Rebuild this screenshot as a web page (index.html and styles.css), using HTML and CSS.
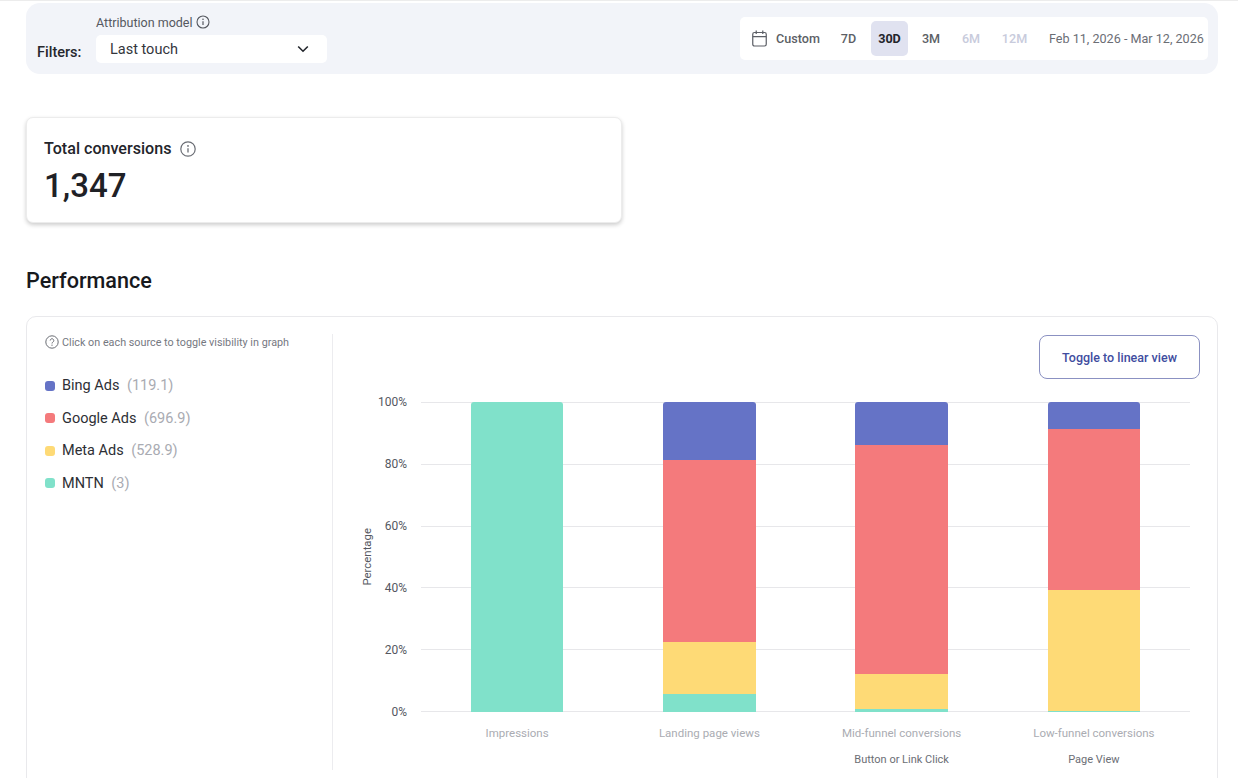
FILE: index.html
```html
<!DOCTYPE html>
<html lang="en">
<head>
<meta charset="utf-8">
<title>Performance</title>
<link rel="stylesheet" href="styles.css">
</head>
<body>
<div class="page">
  <section class="filters">
    <div class="filters-left">
      <span class="filters-label">Filters:</span>
      <div class="field">
        <div class="field-label">Attribution model
          <svg class="icon-info-sm" viewBox="0 0 14 14"><circle cx="7" cy="7" r="6" fill="none" stroke="#55585f" stroke-width="1.1"/><path d="M7 6.3v3.6" stroke="#55585f" stroke-width="1.2" fill="none"/><circle cx="7" cy="4.3" r=".8" fill="#55585f"/></svg>
        </div>
        <div class="select"><span>Last touch</span>
          <svg class="chev" viewBox="0 0 12 8"><path d="M1.2 1.5 6 6.2l4.8-4.7" fill="none" stroke="#22252b" stroke-width="1.6"/></svg>
        </div>
      </div>
    </div>
    <div class="range">
      <svg class="cal" viewBox="0 0 16 18"><rect x=".8" y="2.6" width="14.4" height="14.4" rx="1.8" fill="none" stroke="#5c5f66" stroke-width="1.3"/><path d="M.8 7h14.4M4.5.5v3.6M11.5.5v3.6" fill="none" stroke="#5c5f66" stroke-width="1.3"/></svg>
      <span class="range-item custom">Custom</span>
      <span class="range-item r7">7D</span>
      <span class="range-item active">30D</span>
      <span class="range-item r3">3M</span>
      <span class="range-item off r6">6M</span>
      <span class="range-item off r12">12M</span>
      <span class="dates">Feb 11, 2026 - Mar 12, 2026</span>
    </div>
  </section>

  <section class="kpi">
    <div class="kpi-title">Total conversions
      <svg class="icon-info" viewBox="0 0 16 16"><circle cx="8" cy="8" r="7.2" fill="none" stroke="#6a6d74" stroke-width="1.2"/><path d="M8 7.2v4.3" stroke="#6a6d74" stroke-width="1.3" fill="none"/><circle cx="8" cy="4.9" r=".9" fill="#6a6d74"/></svg>
    </div>
    <div class="kpi-value">1,347</div>
  </section>

  <h2 class="heading">Performance</h2>

  <section class="panel">
    <aside class="legend">
      <div class="hint">
        <svg class="icon-help" viewBox="0 0 14 14"><circle cx="7" cy="7" r="6.2" fill="none" stroke="#6a6d74" stroke-width="1"/><path d="M5.2 5.5a1.8 1.8 0 1 1 2.7 1.6c-.6.35-.9.7-.9 1.4" fill="none" stroke="#6a6d74" stroke-width="1"/><circle cx="7" cy="10.2" r=".65" fill="#6a6d74"/></svg>
        Click on each source to toggle visibility in graph
      </div>
      <ul class="sources">
        <li><i class="dot blue"></i>Bing Ads<span class="num">(119.1)</span></li>
        <li><i class="dot red"></i>Google Ads<span class="num">(696.9)</span></li>
        <li><i class="dot yellow"></i>Meta Ads<span class="num">(528.9)</span></li>
        <li><i class="dot teal"></i>MNTN<span class="num">(3)</span></li>
      </ul>
    </aside>
    <div class="chart-area">
      <div class="toolbar"><button class="toggle" type="button">Toggle to linear view</button></div>
      <div class="chart">
        <div class="y-title"><span>Percentage</span></div>
        <div class="y-ticks">
          <span>100%</span><span>80%</span><span>60%</span><span>40%</span><span>20%</span><span>0%</span>
        </div>
        <div class="plot-wrap">
          <div class="plot">
            <div class="grid"><i></i><i></i><i></i><i></i><i></i><i></i></div>
            <div class="bars">
              <div class="col"><div class="bar"><div class="seg teal" style="height:100%"></div></div></div>
              <div class="col"><div class="bar">
                <div class="seg blue" style="height:18.7%"></div>
                <div class="seg red" style="height:58.6%"></div>
                <div class="seg yellow" style="height:16.9%"></div>
                <div class="seg teal" style="height:5.8%"></div>
              </div></div>
              <div class="col"><div class="bar">
                <div class="seg blue" style="height:13.9%"></div>
                <div class="seg red" style="height:73.9%"></div>
                <div class="seg yellow" style="height:11.4%"></div>
                <div class="seg teal" style="height:0.8%"></div>
              </div></div>
              <div class="col"><div class="bar">
                <div class="seg blue" style="height:8.7%"></div>
                <div class="seg red" style="height:51.8%"></div>
                <div class="seg yellow" style="height:39.2%"></div>
                <div class="seg teal" style="height:0.3%"></div>
              </div></div>
            </div>
          </div>
          <div class="x-labels">
            <div class="x-col"><span class="x-main">Impressions</span></div>
            <div class="x-col"><span class="x-main">Landing page views</span></div>
            <div class="x-col"><span class="x-main">Mid-funnel conversions</span><span class="x-sub">Button or Link Click</span></div>
            <div class="x-col"><span class="x-main">Low-funnel conversions</span><span class="x-sub">Page View</span></div>
          </div>
        </div>
      </div>
    </div>
  </section>
</div>
</body>
</html>
```

FILE: styles.css
```css
* { box-sizing: border-box; }
html, body { margin: 0; padding: 0; height: 778px; overflow: hidden; background: #fff; }
body { font-family: Roboto, "Liberation Sans", sans-serif; color: #1f2126; }

.page {
  height: 778px;
  overflow: hidden;
  padding: 2px 20px 0 26px;
  border-top: 1px solid #ececec;
}

/* Filters */
.filters {
  height: 71px;
  background: #f2f4f9;
  border-radius: 14px;
  display: flex;
  justify-content: space-between;
  align-items: flex-start;
  padding: 0 10px 0 11px;
}
.filters-left { display: flex; align-items: flex-end; height: 60px; }
.filters-label { font-size: 14.5px; font-weight: 500; color: #26282d; width: 59px; line-height: 17px; margin-bottom: 2px; }
.field { display: flex; flex-direction: column; }
.field-label { font-size: 12.5px; color: #55585f; display: flex; align-items: center; gap: 4px; height: 32px; padding-top: 6px; }
.icon-info-sm { width: 14px; height: 14px; }
.select {
  width: 231px; height: 28px; background: #fff; border-radius: 5px;
  padding: 0 18px 0 14px; display: flex; align-items: center; justify-content: space-between;
  font-size: 14.5px; color: #33363c;
}
.chev { width: 12px; height: 8px; }

.range {
  margin-top: 14px;
  width: 468px; height: 43px; background: #fff; border-radius: 5px;
  display: flex; align-items: center; padding-left: 12px; font-size: 12.6px; font-weight: 500; color: #5c5f66;
}
.cal { width: 15px; height: 17px; flex: none; }
.range-item { display: flex; align-items: center; justify-content: center; height: 35px; }
.custom { margin-left: 9px; width: 44px; }
.r7 { margin-left: 20px; width: 17px; }
.active { margin-left: 14px; width: 37px; background: #e0e2f0; border-radius: 5px; color: #23252b; font-weight: 700; }
.r3 { margin-left: 14px; width: 18px; }
.off { color: #c8cbdc; }
.r6 { margin-left: 22px; width: 18px; }
.r12 { margin-left: 22px; width: 25px; }
.dates { margin-left: 22px; font-weight: 400; color: #6b6e75; white-space: nowrap; }

/* KPI */
.kpi {
  margin-top: 43px;
  width: 596px; height: 106px;
  background: #fff;
  border: 1px solid #ececec;
  border-radius: 7px;
  box-shadow: 0 2px 4px rgba(0,0,0,.2);
  padding: 20px 17px 0;
}
.kpi-title { font-size: 16.1px; font-weight: 500; color: #23252b; display: flex; align-items: center; gap: 9px; height: 20px; }
.icon-info { width: 16px; height: 16px; margin-top: 1px; }
.kpi-value { font-size: 33px; font-weight: 500; color: #1f2126; line-height: 40px; margin-top: 8px; }

/* Heading */
.heading { margin: 45px 0 0; font-size: 21.6px; font-weight: 500; line-height: 26px; color: #17191d; height: 26px; }

/* Panel */
.panel {
  margin-top: 22px;
  height: 480px;
  border: 1px solid #e9e9ec;
  border-radius: 10px 10px 0 0;
  display: flex;
}
.legend { width: 306px; flex: none; margin-top: 17px; border-right: 1px solid #ececef; padding-left: 18px; height: 436px; }
.hint { font-size: 10.8px; color: #75787f; display: flex; align-items: center; gap: 3px; height: 14px; margin-top: 1px; white-space: nowrap; }
.icon-help { width: 14px; height: 14px; }
.sources { list-style: none; margin: 20.5px 0 0; padding: 0; }
.sources li { display: flex; align-items: center; height: 32.5px; font-size: 14.5px; color: #2d2f35; }
.dot { width: 10px; height: 10px; border-radius: 3px; margin-right: 7px; }
.num { color: #a9abb2; margin-left: 7.5px; }
.blue { background: #6573c6; }
.red { background: #f47a7c; }
.yellow { background: #feda76; }
.teal { background: #80e1ca; }

.chart-area { flex: 1; min-width: 0; padding: 18px 17px 0 0; display: flex; flex-direction: column; }
.toolbar { display: flex; justify-content: flex-end; }
.toggle {
  width: 161px; height: 44px; background: #fff; border: 1px solid #8b91c2; border-radius: 8px;
  font: 500 12.5px Roboto, "Liberation Sans", sans-serif; color: #414d9f;
}
.chart { display: flex; margin-top: 23px; padding-right: 10px; }
.y-title { width: 66px; flex: none; height: 310px; display: flex; align-items: center; padding-left: 27px; }
.y-title span { writing-mode: vertical-rl; transform: rotate(180deg); font-size: 11.4px; color: #55585f; }
.y-ticks { width: 22px; flex: none; height: 310px; display: flex; flex-direction: column; justify-content: space-between; align-items: flex-end; font-size: 12px; color: #55585f; margin-left: -14px; margin-right: 14px; }
.y-ticks span { height: 0; line-height: 0; white-space: nowrap; }
.plot-wrap { flex: 1; min-width: 0; }
.plot { position: relative; height: 310px; }
.grid { position: absolute; inset: 0; display: flex; flex-direction: column; justify-content: space-between; }
.grid i { display: block; height: 1px; background: #e7e7ea; }
.bars { position: relative; height: 100%; display: flex; }
.col { flex: 1; display: flex; justify-content: center; }
.bar { width: 92.5px; height: 100%; border-radius: 3px 3px 0 0; overflow: hidden; display: flex; flex-direction: column; }
.x-labels { display: flex; }
.x-col { flex: 1; display: flex; flex-direction: column; align-items: center; padding-top: 14px; }
.x-main { font-size: 11.5px; line-height: 14px; color: #aaacb2; white-space: nowrap; }
.x-sub { font-size: 11px; line-height: 14px; color: #6b6e75; margin-top: 13px; white-space: nowrap; }
```
